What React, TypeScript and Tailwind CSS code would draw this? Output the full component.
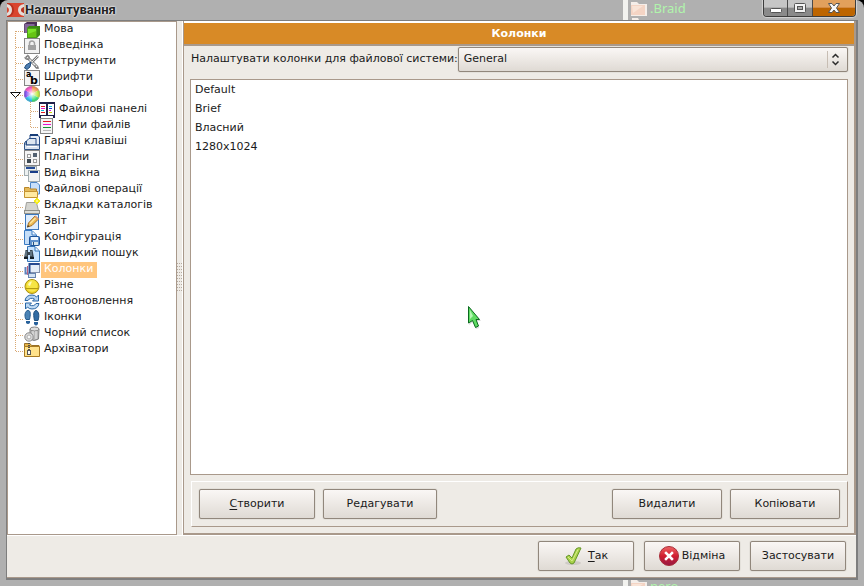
import React, { useState } from "react";

type IconProps = { children: React.ReactNode };

function Icon({ children }: IconProps) {
  return (
    <svg width="16" height="16" viewBox="0 0 16 16" className="block shrink-0" aria-hidden="true">
      {children}
    </svg>
  );
}

const icons: Record<string, React.ReactNode> = {
  language: (
    <Icon>
      <path d="M0 2 L3 0 H13 V9 L11 11 H0Z" fill="#4c3159" />
      <rect x="0.500" y="2" width="10" height="9" fill="#84669a" />
      <path d="M3 6 L5 4 H16 V13 L13 16 H3Z" fill="#3c8a14" />
      <rect x="3.500" y="6.500" width="9" height="9" fill="#7be32a" stroke="#4ca016" />
      <path d="M4 12 L12 9 V15 H4Z" fill="#66c414" />
    </Icon>
  ),
  behavior: (
    <Icon>
      <rect x="0.500" y="0.500" width="15" height="15" fill="#f2f2f2" stroke="#858585" />
      <path d="M5.500 8 V5.500 A2.500 2.500 0 0 1 10.500 5.500 V8" fill="none" stroke="#a2a2a2" strokeWidth="1.500" />
      <rect x="4" y="7" width="8" height="5" fill="#a2a2a2" />
    </Icon>
  ),
  tools: (
    <Icon>
      <path d="M3 3 L13 13" stroke="#777" strokeWidth="3" strokeLinecap="round" />
      <path d="M3 3 L13 13" stroke="#ececec" strokeWidth="1.400" />
      <path d="M1 3 Q1 6 5 5 Q6 2 3 1 M11 11 Q11 15 15 14" stroke="#828282" fill="none" strokeWidth="1.300" />
      <path d="M14 2 L8 8" stroke="#777" strokeWidth="2.500" fill="none" />
      <path d="M14 2 L8 8" stroke="#e3e3e3" />
      <path d="M7 8 L2 11 L0.500 14 L3 15.500 L6 13Z" fill="#4f7fb2" stroke="#234d7a" />
    </Icon>
  ),
  fonts: (
    <Icon>
      <rect x="0.500" y="0.500" width="15" height="15" fill="#f4f4f4" stroke="#858585" />
      <text x="2" y="7" fontSize="8" fontWeight="bold" fontFamily="DejaVu Sans, sans-serif">a</text>
      <text x="6" y="14" fontSize="11" fontWeight="bold" fontFamily="DejaVu Sans, sans-serif">b</text>
    </Icon>
  ),
  colors: (
    <Icon>
      <defs>
        <radialGradient id="wheel"><stop offset="0" stopColor="#fff" /><stop offset="1" stopColor="#fff" stopOpacity="0" /></radialGradient>
      </defs>
      <path d="M8 8 L8 0 A8 8 0 0 1 15 4Z" fill="#f08a42" />
      <path d="M8 8 L15 4 A8 8 0 0 1 15 12Z" fill="#b4e42c" />
      <path d="M8 8 L15 12 A8 8 0 0 1 8 16Z" fill="#22dc69" />
      <path d="M8 8 L8 16 A8 8 0 0 1 1 12Z" fill="#13b4eb" />
      <path d="M8 8 L1 12 A8 8 0 0 1 1 4Z" fill="#7b42f0" />
      <path d="M8 8 L1 4 A8 8 0 0 1 8 0Z" fill="#f43cbc" />
      <circle cx="8" cy="8" r="7" fill="url(#wheel)" />
      <circle cx="8" cy="8" r="7.500" fill="none" stroke="#999" strokeOpacity="0.600" />
    </Icon>
  ),
  panels: (
    <Icon>
      <g shapeRendering="crispEdges">
        <rect x="0" y="0" width="16" height="14" fill="#20204a" />
        <rect x="1" y="2" width="6" height="11" fill="#fff" />
        <rect x="9" y="2" width="6" height="11" fill="#fff" />
        <rect x="0" y="14" width="2" height="2" fill="#20204a" />
        <rect x="14" y="14" width="2" height="2" fill="#20204a" />
        <rect x="2" y="4" width="4" height="1" fill="#e01b24" />
        <rect x="2" y="6" width="4" height="1" fill="#e815d0" />
        <rect x="2" y="8" width="3" height="1" fill="#11b4d8" />
        <rect x="2" y="10" width="4" height="1" fill="#e01b24" />
        <rect x="10" y="4" width="3" height="1" fill="#11b4d8" />
        <rect x="10" y="6" width="3" height="1" fill="#1934d8" />
        <rect x="10" y="8" width="2" height="1" fill="#e815d0" />
        <rect x="10" y="10" width="3" height="1" fill="#d0d000" />
      </g>
    </Icon>
  ),
  filetypes: (
    <Icon>
      <g shapeRendering="crispEdges">
        <rect x="1" y="0" width="13" height="16" fill="#858585" />
        <rect x="2" y="1" width="11" height="14" fill="#f5f5f5" />
        <rect x="4" y="3" width="8" height="1" fill="#e01b24" />
        <rect x="4" y="6" width="8" height="1" fill="#e815d0" />
        <rect x="4" y="9" width="8" height="1" fill="#149032" />
        <rect x="4" y="12" width="8" height="1" fill="#b8b8b8" />
      </g>
    </Icon>
  ),
  hotkeys: (
    <Icon>
      <path d="M6 1 H13.500 L15.500 3 V11 H6Z" fill="#e7edf7" stroke="#244b86" />
      <path d="M6 1H14" stroke="#173d78" strokeWidth="2" />
      <path d="M2.500 7 L5 4.500 H12 V11 H2.500Z" fill="#dde6f0" stroke="#244b86" />
      <path d="M0.500 9 L2 7 V11 H15.500 V15.500 H0.500Z" fill="#dae3ef" stroke="#315587" />
      <path d="M3 12.500H13" stroke="#fff" />
    </Icon>
  ),
  plugins: (
    <Icon>
      <g shapeRendering="crispEdges">
        <rect x="0" y="0" width="16" height="16" fill="#858585" />
        <rect x="1" y="1" width="14" height="14" fill="#f4f4f4" />
        <rect x="3" y="4" width="4" height="4" fill="#999" />
        <rect x="4" y="5" width="2" height="2" fill="#fff" />
        <rect x="9" y="3" width="4" height="4" fill="#526070" />
        <rect x="3" y="9" width="4" height="4" fill="#3e4a53" />
        <rect x="9" y="9" width="4" height="4" fill="#999" />
        <rect x="10" y="10" width="2" height="2" fill="#fff" />
      </g>
    </Icon>
  ),
  view: (
    <Icon>
      <g shapeRendering="crispEdges">
        <rect x="0" y="0" width="13" height="10" fill="#a2adb0" />
        <rect x="1" y="1" width="11" height="8" fill="#edf1f1" />
        <rect x="2" y="1" width="9" height="2" fill="#244b96" />
        <rect x="4" y="4" width="12" height="12" fill="#a2adb0" />
        <rect x="5" y="5" width="10" height="10" fill="#f1f3f2" />
        <rect x="6" y="5" width="8" height="2" fill="#173d88" />
      </g>
    </Icon>
  ),
  operations: (
    <Icon>
      <path d="M6.500 0.500H13L15.500 3V12H6.500Z" fill="#c8e0fa" stroke="#4c86c7" />
      <path d="M0.500 15 V5.500H5L6.500 7H12.500V15Z" fill="#e4b959" stroke="#b98629" />
      <path d="M0.500 9.500H13.500V15.500H0.500Z" fill="#ffe9a0" stroke="#c59331" />
    </Icon>
  ),
  tabs: (
    <Icon>
      <path d="M1 13 L2.500 4.500H12.500L14.500 13Z" fill="#d4d4cf" stroke="#a0a09b" />
      <rect x="0.500" y="12.500" width="15" height="3" fill="#deded8" stroke="#8f8f89" />
      <path d="M13 0V6 M10 3H16" stroke="#f4ed18" strokeWidth="2" />
      <path d="M11 1L15 5 M15 1L11 5" stroke="#f4ed18" />
      <circle cx="13" cy="3" r="1" fill="#fffaa0" />
    </Icon>
  ),
  log: (
    <Icon>
      <rect x="1.500" y="0.500" width="13" height="15" fill="#deedfd" stroke="#3e78bd" />
      <path d="M3.500 13 L4.500 9 L11 2 L14.500 5 L8 11.500Z" fill="#eebd55" stroke="#a66e25" />
      <path d="M6 9.500 L12 3.500" stroke="#ffe7a0" strokeWidth="1.500" />
      <path d="M11.500 1.500 L15 5 L13.500 6 L10.500 3Z" fill="#dc9c71" />
      <path d="M3 13.500L5.500 12.500L4 11Z" fill="#4a3b2a" />
    </Icon>
  ),
  config: (
    <Icon>
      <path d="M0.500 0.500H8L12.500 5V14.500H0.500Z" fill="#c5def8" stroke="#397bc4" />
      <path d="M8 1V5H12" fill="#f4faff" stroke="#397bc4" />
      <rect x="5.500" y="6.500" width="10" height="9" rx="1" fill="#5e91cc" stroke="#1f559b" />
      <rect x="7" y="7" width="7" height="3" fill="#eff6ff" />
      <rect x="8" y="12" width="6" height="3" fill="#d6e6ed" />
      <rect x="9" y="12" width="1" height="3" fill="#264f81" />
    </Icon>
  ),
  search: (
    <Icon>
      <path d="M3.500 0.500H11L15.500 5V15.500H3.500Z" fill="#c7e3ff" stroke="#3574b6" />
      <path d="M11 1V5H15" fill="#edf6ff" stroke="#3574b6" />
      <path d="M0 12 L1.500 4H4V6H6V4H8.500L10 12H6V9H4V12Z" fill="#394651" />
      <path d="M2 5V10 M7 5V10" stroke="#8aa1b1" />
      <rect x="0" y="11" width="4" height="2" fill="#151e26" />
      <rect x="6" y="11" width="4" height="2" fill="#151e26" />
    </Icon>
  ),
  columns: (
    <Icon>
      <rect x="5.500" y="1.500" width="10" height="9" fill="#e4edf8" stroke="#8391ad" />
      <path d="M5 2H15.500 M5.500 1V11" stroke="#264a91" strokeWidth="2" />
      <path d="M1.500 5V11.500H5" fill="none" stroke="#5e83bc" strokeWidth="2" />
      <path d="M3.500 4V12.500H12" fill="none" stroke="#bd5f7c" />
      <rect x="4.500" y="11.500" width="7" height="4" fill="#d3e2f3" stroke="#6684b0" />
    </Icon>
  ),
  misc: (
    <Icon>
      <circle cx="8" cy="8.500" r="7" fill="#ecd024" stroke="#a89016" />
      <path d="M2.500 7 Q4 2 8 2 T13.500 7 L13 10H3Z" fill="#f6e545" />
      <path d="M2 10.500H14" stroke="#b59b10" />
      <path d="M3 11.500Q8 16 13 11.500Z" fill="#f9e64d" />
      <path d="M4 7Q5 3 8 3.500L6 8Z" fill="#fffab8" />
    </Icon>
  ),
  refresh: (
    <Icon>
      <path d="M1 6.500 Q2 1 8 1 Q11 1 12.500 3 L14.500 1V7H8.500L10.500 5 Q6 3 4 6.500Z" fill="#b5d3f1" stroke="#2865a4" />
      <path d="M15 9.500 Q14 15 8 15 Q5 15 3.500 13 L1.500 15V9H7.500L5.500 11 Q10 13 12 9.500Z" fill="#c0dbf4" stroke="#2865a4" />
    </Icon>
  ),
  footprints: (
    <Icon>
      <path d="M4 0.500C7 0.500 6.500 5 5.500 9.500H2C0 6 1 0.500 4 0.500Z" fill="#4b83b5" stroke="#245b8f" />
      <path d="M12 0.500C15 1 15.500 6 14 10.500H10.500C9.500 6 9 1 12 0.500Z" fill="#336da4" stroke="#1f4f7d" />
      <path d="M2 11H6V13Q4 15 2 13Z M10 12H14V14Q12 17 10 14Z" fill="#28619b" />
    </Icon>
  ),
  blacklist: (
    <Icon>
      <path d="M6 3V13Q10 16 14.500 13L15 3Z" fill="#b7b7b7" stroke="#828282" />
      <ellipse cx="10.500" cy="3" rx="4.500" ry="2" fill="#dedede" stroke="#858585" />
      <path d="M9 5V12 M12 5V13" stroke="#eeeeee" />
      <circle cx="5" cy="11" r="4.200" fill="#dddddd" stroke="#888" />
      <circle cx="5" cy="11" r="2" fill="#f7f7f7" stroke="#adadad" />
    </Icon>
  ),
  archives: (
    <Icon>
      <path d="M0.500 14V1.500H6L7.500 3.500H15V14Z" fill="#e3b348" stroke="#987126" />
      <path d="M0.500 4.500H15.500V14.500H0.500Z" fill="#ffe28b" stroke="#a87a22" />
      <path d="M5 1V13" stroke="#4e4e4e" strokeWidth="2" strokeDasharray="1 1" />
      <rect x="3.500" y="8.500" width="3" height="4" fill="#fafafa" stroke="#575757" />
    </Icon>
  ),
};

type Node = { id: string; label: string; children?: Node[] };

const tree: Node[] = [
  { id: "language", label: "Мова" },
  { id: "behavior", label: "Поведінка" },
  { id: "tools", label: "Інструменти" },
  { id: "fonts", label: "Шрифти" },
  {
    id: "colors",
    label: "Кольори",
    children: [
      { id: "panels", label: "Файлові панелі" },
      { id: "filetypes", label: "Типи файлів" },
    ],
  },
  { id: "hotkeys", label: "Гарячі клавіші" },
  { id: "plugins", label: "Плагіни" },
  { id: "view", label: "Вид вікна" },
  { id: "operations", label: "Файлові операції" },
  { id: "tabs", label: "Вкладки каталогів" },
  { id: "log", label: "Звіт" },
  { id: "config", label: "Конфігурація" },
  { id: "search", label: "Швидкий пошук" },
  { id: "columns", label: "Колонки" },
  { id: "misc", label: "Різне" },
  { id: "refresh", label: "Автооновлення" },
  { id: "footprints", label: "Іконки" },
  { id: "blacklist", label: "Чорний список" },
  { id: "archives", label: "Архіватори" },
];

type BranchProps = { nested?: boolean; first?: boolean; last?: boolean; expanded?: boolean };

function Branch({ nested, first, last, expanded }: BranchProps) {
  const trunk = nested ? 23 : 8;
  const width = nested ? 31 : 16;
  return (
    <svg width={width} height="16" className="block shrink-0" shapeRendering="crispEdges" aria-hidden="true">
      <g stroke="#d9a873" strokeDasharray="1 1">
        {nested && <path d="M7.500 0V16" />}
        <path d={`M${trunk - 0.5} ${first ? 9 : 0}V${last ? 10 : 16}`} />
        <path d={`M${trunk} 9.5H${trunk + 7}`} />
      </g>
      {expanded && (
        <path d="M2.500 6.500H12.500L7.500 11.500Z" fill="#fff" stroke="#111" shapeRendering="geometricPrecision" />
      )}
    </svg>
  );
}

type RowProps = BranchProps & { node: Node; selected: string; onSelect: (id: string) => void };

function TreeRow({ node, selected, onSelect, nested, first, last }: RowProps) {
  const active = node.id === selected;
  return (
    <li role="treeitem" aria-selected={active}>
      <button type="button" onClick={() => onSelect(node.id)} className="flex h-4 items-start text-left">
        <Branch nested={nested} first={first} last={last} expanded={Boolean(node.children)} />
        {icons[node.id]}
        <span className={active ? "ml-px h-4 bg-[#ffc57d] pr-1 pl-[3px] leading-[14px] text-white" : "ml-px h-4 pr-1 pl-[3px] leading-[14px]"}>
          {node.label}
        </span>
      </button>
      {node.children && (
        <ul role="group">
          {node.children.map((child, i) => (
            <TreeRow
              key={child.id}
              node={child}
              selected={selected}
              onSelect={onSelect}
              nested
              last={i === (node.children ?? []).length - 1}
            />
          ))}
        </ul>
      )}
    </li>
  );
}

function PushButton({ className, children }: { className: string; children: React.ReactNode }) {
  return (
    <button
      type="button"
      className={`flex h-[30px] items-center justify-center rounded-xs border border-[#91877c] bg-linear-to-b from-[#faf7f5] to-[#dfdad4] shadow-[0_0_1px_#91877c] ${className}`}
    >
      {children}
    </button>
  );
}

function Backdrop({ name, className }: { name: string; className: string }) {
  return (
    <div className={`absolute left-[623px] flex items-start ${className}`} aria-hidden="true">
      <span className="h-5 w-[5px] bg-[#f2f2ef]" />
      <svg width="18" height="20" viewBox="0 0 18 20" className="ml-px shrink-0">
        <path d="M2 2H8L10 4H18V16H2Z M3 18H9L10 20H3Z" fill="#f5eee9" />
        <path d="M2 5H16V15H2Z" fill="#f4d4c4" />
        <path d="M3 6H14L4 13Z" fill="#f9e4d7" />
      </svg>
      <span className="ml-[3px] font-['Noto_Sans',sans-serif] text-[13px] leading-4 text-[#b0f5ac]">{name}</span>
    </div>
  );
}

function WindowControls() {
  return (
    <div className="flex h-[17px] w-[93px] overflow-hidden rounded-b-sm border border-t-0 border-[#3d3d3d] shadow-[0_0_1px_1px_#d5d5d5]">
      <button type="button" aria-label="Згорнути" className="flex w-6 items-center justify-center border-r border-[#4a4a4a] bg-linear-to-b from-[#c6c6c6] from-45% to-[#8a8a8a] to-50%">
        <svg width="14" height="14"><rect x="1.500" y="7.500" width="11" height="4" rx="1" fill="#fff" stroke="#555" /></svg>
      </button>
      <button type="button" aria-label="Розгорнути" className="flex w-[25px] items-center justify-center border-r border-[#4a4a4a] bg-linear-to-b from-[#c6c6c6] from-45% to-[#8a8a8a] to-50%">
        <svg width="14" height="14">
          <rect x="1.500" y="2.500" width="11" height="9" rx="1" fill="#f4f4f4" stroke="#555" />
          <rect x="4.500" y="5.500" width="5" height="3" fill="#aaa" stroke="#555" />
        </svg>
      </button>
      <button type="button" aria-label="Закрити" className="flex flex-1 items-center justify-center bg-linear-to-b from-[#e2a05c] from-45% to-[#bd6500] to-50%">
        <svg width="14" height="14">
          <path d="M1.500 2.500H5L7 5L9 2.500H12.500L9.500 7L12.500 11.500H9L7 9L5 11.500H1.500L4.500 7Z" fill="#f6f6f6" stroke="#555" />
        </svg>
      </button>
    </div>
  );
}

export default function App() {
  const [selected, setSelected] = useState("columns");
  const sets = ["Default", "Brief", "Власний", "1280x1024"];

  return (
    <div className="relative flex h-screen flex-col overflow-hidden bg-black font-['DejaVu_Sans',sans-serif] text-[11px] text-[#1a1a1a]">
      <div className="relative flex min-h-0 flex-1 flex-col overflow-hidden rounded-t-lg bg-[#b0b0b0] px-1.5 pb-1.5">
        <Backdrop name=".Braid" className="top-0" />
        <Backdrop name="nero" className="-bottom-3" />

        <header className="relative flex h-5 shrink-0 items-start justify-between pr-0.5 pl-px">
          <div className="flex h-5 items-center">
            <svg width="17" height="14" viewBox="0 0 17 14" aria-hidden="true">
              <rect width="17" height="14" fill="#d9452e" />
              <path d="M0 0H2Q7 2 7 7T2 14H0V12Q5 11 5 7T0 2Z" fill="#b8311f" />
              <path d="M0 1Q5 2 5 7T0 13V10Q2 9 2 7T0 4Z" fill="#e4dcd8" />
              <path d="M17 1Q11 2 11 7T17 13V10Q14 9 14 7T17 4Z" fill="#e4dcd8" />
              <path d="M17 4Q14 5 14 7T17 10Z" fill="#b8311f" />
            </svg>
            <h1 className="ml-px font-[Roboto,sans-serif] text-[13px] leading-5 font-bold text-[#222] [text-shadow:0_0_2px_#fff,0_0_2px_#fff]">
              Налаштування
            </h1>
          </div>
          <WindowControls />
        </header>

        <div className="relative flex min-h-0 flex-1 flex-col border border-r-2 border-b-2 border-[#7e7e7e] bg-[#eeebe6]">
          <div className="flex min-h-0 flex-1">
            <nav className="w-[170px] shrink-0 border border-[#a9998b] bg-white">
              <ul role="tree" aria-label="Розділи">
                {tree.map((node, i) => (
                  <TreeRow
                    key={node.id}
                    node={node}
                    selected={selected}
                    onSelect={setSelected}
                    first={i === 0}
                    last={i === tree.length - 1}
                  />
                ))}
              </ul>
            </nav>

            <div className="flex w-1.5 shrink-0 items-center border-r border-white" aria-hidden="true">
              <svg width="5" height="30" shapeRendering="crispEdges">
                <path d="M0.500 0V30M2.500 0V30M4.500 0V30" stroke="#b5aa9f" strokeDasharray="1 2" />
              </svg>
            </div>

            <main className="flex min-w-0 flex-1 flex-col border-r-2 border-b-2 border-l border-[#a9998b]">
              <h2 className="h-[25px] shrink-0 border-t-2 border-b-2 border-t-white border-b-[#a9998b] bg-[#d88a26] text-center leading-[21px] font-bold text-white">
                Колонки
              </h2>
              <div className="flex min-h-0 flex-1 flex-col px-1.5">
                <div className="mt-px flex h-[25px] items-center">
                  <label htmlFor="fs" className="ml-px whitespace-nowrap">
                    Налаштувати колонки для файлової системи:
                  </label>
                  <div className="relative h-[25px] flex-1">
                    <select
                      id="fs"
                      defaultValue="General"
                      className="h-full w-full appearance-none rounded-xs border border-[#91877c] bg-linear-to-b from-[#faf7f5] to-[#dfdad4] px-[5px] shadow-[0_0_1px_#91877c]"
                    >
                      <option>General</option>
                    </select>
                    <svg width="20" height="18" className="pointer-events-none absolute top-1 right-0.5" aria-hidden="true">
                      <path d="M1.500 0V17" stroke="#c7bdb3" />
                      <path d="M6.500 6.500L9.500 3.500L12.500 6.500M6.500 10.500L9.500 13.500L12.500 10.500" fill="none" stroke="#2b2b2b" strokeWidth="1.500" />
                    </svg>
                  </div>
                </div>

                <ul role="listbox" aria-label="Набори колонок" className="mt-[7px] min-h-0 flex-1 border border-[#a9998b] bg-white px-1">
                  {sets.map((name) => (
                    <li key={name} role="option" aria-selected={false} className="h-[19px] leading-[19px]">
                      {name}
                    </li>
                  ))}
                </ul>

                <div className="mt-1.5 mb-1.5 ml-px flex h-[46px] shrink-0 items-center gap-2 border border-t-white border-r-[#a9998b] border-b-[#a9998b] border-l-white px-[7px]">
                  <PushButton className="w-[116px]">
                    <u className="underline-offset-2">С</u>творити
                  </PushButton>
                  <PushButton className="mr-auto w-[114px]">Редагувати</PushButton>
                  <PushButton className="w-[110px]">Видалити</PushButton>
                  <PushButton className="w-[110px]">Копіювати</PushButton>
                </div>
              </div>
            </main>
          </div>

          <footer className="flex h-[43px] shrink-0 items-start justify-end gap-2.5 border-t border-b border-t-white border-b-[#a9998b] pt-[5px] pr-2.5">
            <PushButton className="w-24">
              <svg width="20" height="20" viewBox="0 0 20 20" className="mr-1" aria-hidden="true">
                <ellipse cx="9" cy="17" rx="8" ry="2" fill="#cfcbc6" />
                <path d="M2 11L5 9L8 12L12 3Q14 1 17 2L10 17Q8 19 6 17Z" fill="#a9d24a" stroke="#669629" strokeLinejoin="round" />
                <path d="M4 11L8 15L14 3.500" fill="none" stroke="#d7ed8b" />
              </svg>
              <u className="underline-offset-2">Т</u>ак
            </PushButton>
            <PushButton className="w-24">
              <svg width="20" height="20" viewBox="0 0 20 20" className="mr-[3px]" aria-hidden="true">
                <defs>
                  <linearGradient id="cancel" x1="0" y1="0" x2="0" y2="1">
                    <stop offset="0" stopColor="#ed6565" />
                    <stop offset="0.500" stopColor="#d21f30" />
                    <stop offset="1" stopColor="#951744" />
                  </linearGradient>
                </defs>
                <circle cx="10" cy="10" r="9.500" fill="url(#cancel)" stroke="#a82d39" />
                <path d="M7 7L13 13M13 7L7 13" stroke="#fff" strokeWidth="2.500" strokeLinecap="square" />
              </svg>
              Відміна
            </PushButton>
            <PushButton className="w-24">Застосувати</PushButton>
          </footer>
        </div>
      </div>

      <svg width="16" height="26" viewBox="0 0 16 26" className="absolute top-[305px] left-[467px]" aria-hidden="true">
        <path d="M2 2V20L6 17L9 24L12 23L10 16H14Z" fill="#888" opacity="0.300" />
        <path d="M1.500 1.500V18L5.500 15.500L8.500 22.500L11.500 21L9 14.500H12.500Z" fill="#5fdc62" stroke="#0b6a20" />
        <path d="M3 5V14L6 11Z" fill="#b5f7b3" />
      </svg>
    </div>
  );
}
